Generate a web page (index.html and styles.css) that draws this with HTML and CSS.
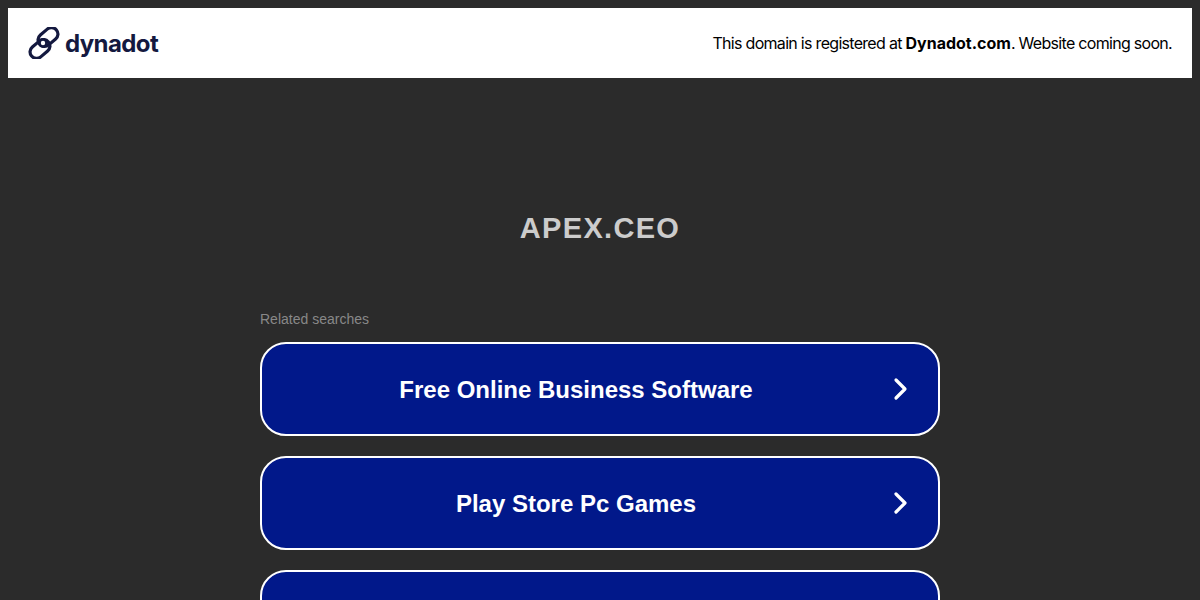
FILE: index.html
```html
<!DOCTYPE html>
<html lang="en">
<head>
    <meta charset="UTF-8">
    <meta name="viewport" content="width=device-width, initial-scale=1.0">
    <title>apex.ceo</title>
    <link rel="stylesheet" href="styles.css">
</head>
<body>
    <div class="banner">
        <a class="logo" href="#">
            <svg class="logo-icon" width="32" height="32" viewBox="0 0 32 32" fill="none" stroke="#14193f" stroke-width="3.2">
                <rect x="9" y="3.5" width="22" height="13" rx="6.5" transform="rotate(-40 20 10)"/>
                <rect x="1" y="15.5" width="22" height="13" rx="6.5" transform="rotate(-40 12 22)"/>
                <circle cx="15" cy="16" r="3.6" fill="#fff" stroke-width="2.8"/>
            </svg>
            <span class="logo-text">dynadot</span>
        </a>
        <p class="banner-text">This domain is registered at <b>Dynadot.com</b>. Website coming soon.</p>
    </div>

    <h1 class="domain">APEX.CEO</h1>

    <div class="searches">
        <p class="searches-title">Related searches</p>
        <a class="search-link" href="#">
            <span class="search-label">Free Online Business Software</span>
            <svg class="chevron" width="16" height="24" viewBox="0 0 16 24" fill="none" stroke="#fff" stroke-width="3.2" stroke-linecap="round" stroke-linejoin="round"><path d="M3 3l9 9-9 9"/></svg>
        </a>
        <a class="search-link" href="#">
            <span class="search-label">Play Store Pc Games</span>
            <svg class="chevron" width="16" height="24" viewBox="0 0 16 24" fill="none" stroke="#fff" stroke-width="3.2" stroke-linecap="round" stroke-linejoin="round"><path d="M3 3l9 9-9 9"/></svg>
        </a>
        <a class="search-link" href="#"></a>
    </div>
</body>
</html>
```

FILE: styles.css
```css
html, body {
    height: 100%;
    overflow: hidden;
}
body {
    margin: 8px;
    background-color: #2b2b2b;
    font-family: "Liberation Sans", Arial, sans-serif;
}
a {
    text-decoration: none;
}
.banner {
    display: flex;
    align-items: center;
    justify-content: space-between;
    height: 70px;
    padding: 0 20px;
    background-color: #fff;
}
.logo {
    display: flex;
    align-items: center;
    gap: 5px;
}
.logo-text {
    font-family: Inter, sans-serif;
    font-size: 24px;
    font-weight: 700;
    letter-spacing: -0.6px;
    color: #14193f;
}
.banner-text {
    margin: 0;
    font-family: Inter, sans-serif;
    font-size: 16px;
    letter-spacing: -0.7px;
    color: #000;
}
.banner-text b {
    letter-spacing: 0;
}
.domain {
    margin: 131px 0 0;
    font-size: 29px;
    line-height: 38px;
    font-weight: 700;
    letter-spacing: 1.3px;
    text-align: center;
    color: #ccc;
}
.searches {
    display: flex;
    flex-direction: column;
    gap: 20px;
    width: 680px;
    margin: 63px auto 0;
}
.searches-title {
    margin: 0 0 -6px;
    font-size: 14px;
    line-height: 18px;
    color: #888;
}
.search-link {
    display: flex;
    align-items: center;
    flex-shrink: 0;
    box-sizing: border-box;
    height: 94px;
    padding: 0 29px;
    background-color: #01188a;
    border: 2px solid #fff;
    border-radius: 26px;
}
.search-label {
    flex: 1;
    padding-top: 2px;
    font-size: 24px;
    font-weight: 700;
    text-align: center;
    color: #fff;
}
.chevron {
    margin-left: 32px;
}
```
